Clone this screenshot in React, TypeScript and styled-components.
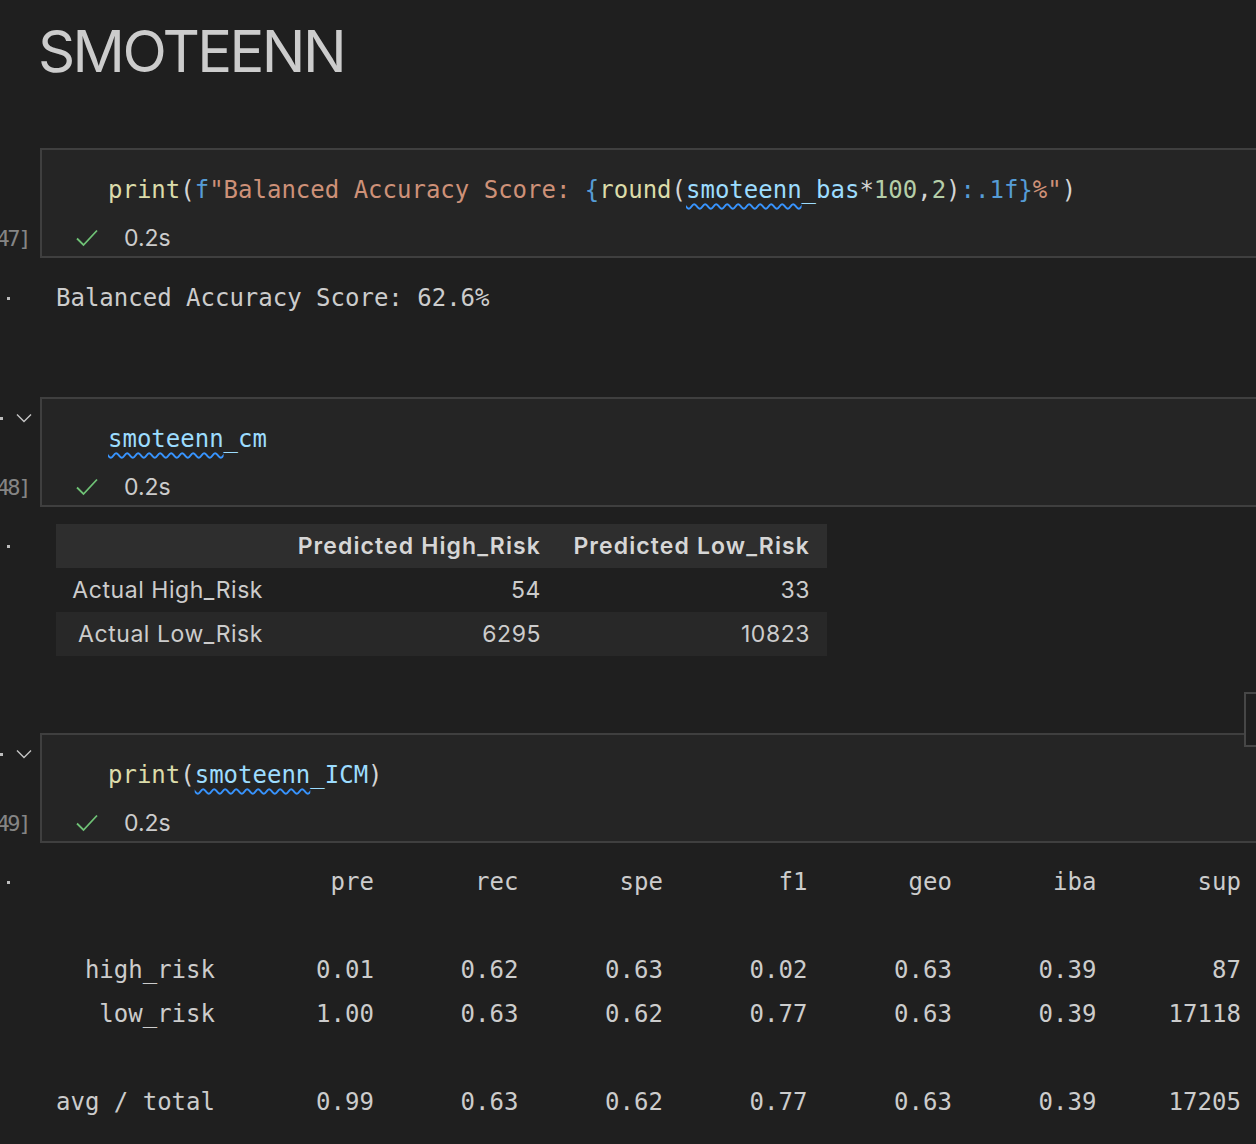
import React from "react";
import styled, { createGlobalStyle } from "styled-components";

const Global = createGlobalStyle`
  html, body { margin: 0; padding: 0; background: #1f1f1f; overflow: hidden; }
  #root { width: 1256px; height: 1144px; overflow: hidden; }
`;

const Page = styled.div`
  display: flex;
  flex-direction: column;
  background: #1f1f1f;
  color: #cccccc;
  min-height: 1144px;
`;

const Title = styled.h1`
  margin: 22px 0 0 38px;
  font-family: Inter, "Liberation Sans", sans-serif;
  font-weight: 400;
  font-size: 58px;
  line-height: 58px;
  letter-spacing: -2.6px;
  color: #cccccc;
`;

const CellRow = styled.div<{ $top: number }>`
  position: relative;
  display: grid;
  grid-template-columns: 40px 1fr;
  margin-top: ${(p) => p.$top}px;
  height: 110px;
`;

const Gutter = styled.div`
  display: flex;
  flex-direction: column;
  justify-content: space-between;
  overflow: hidden;
`;

const Toolbar = styled.div`
  display: flex;
  align-items: center;
  height: 16px;
  margin-top: 13px;
  gap: 13px;
  color: #c5c5c5;
`;

const Dot = styled.span`
  display: block;
  width: 3px;
  height: 3px;
  background: #bdbdbd;
  flex: none;
`;

const ExecCount = styled.div`
  display: flex;
  justify-content: flex-end;
  align-items: center;
  height: 36px;
  margin-bottom: 2px;
  padding-right: 11px;
  font-family: "DejaVu Sans Mono", monospace;
  font-size: 22px;
  letter-spacing: -2.4px;
  color: #858585;
  white-space: nowrap;
`;

const CellBox = styled.div`
  box-sizing: border-box;
  margin-right: -20px;
  border: 2px solid #3f3f3f;
  background: #252525;
  padding-top: 22px;
  display: flex;
  flex-direction: column;
  gap: 12px;
`;

const CodeLine = styled.div`
  height: 36px;
  line-height: 36px;
  padding-left: 66px;
  font-family: "DejaVu Sans Mono", monospace;
  font-size: 24px;
  color: #d4d4d4;
  white-space: pre;
`;

type Tone = "fn" | "var" | "str" | "kw" | "num" | "plain";
const toneColor: Record<Tone, string> = {
  fn: "#dcdcaa",
  var: "#9cdcfe",
  str: "#ce9178",
  kw: "#569cd6",
  num: "#b5cea8",
  plain: "#d4d4d4",
};

const Tok = styled.span<{ $t: Tone }>`
  color: ${(p) => toneColor[p.$t]};
`;

const Squiggle = styled.span`
  text-decoration: underline wavy #3794ff;
  text-decoration-thickness: 1.5px;
  text-underline-offset: 5px;
  text-decoration-skip-ink: none;
`;

const Status = styled.div`
  display: flex;
  align-items: center;
  height: 36px;
  padding-left: 33px;
  gap: 25px;
  font-family: Inter, "Liberation Sans", sans-serif;
  font-size: 23px;
  color: #cccccc;
`;

const EdgeTab = styled.div`
  position: absolute;
  top: -41px;
  right: -12px;
  width: 20px;
  height: 51px;
  border: 2px solid #474747;
  background: #1f1f1f;
`;

const Output = styled.div<{ $top: number }>`
  display: grid;
  grid-template-columns: 40px 1fr;
  padding-top: ${(p) => p.$top}px;
`;

const OutGutter = styled.div<{ $lh: number }>`
  display: flex;
  align-items: center;
  height: ${(p) => p.$lh}px;
  padding-left: 7px;
`;

const Pre = styled.pre<{ $lh: number }>`
  margin: 0;
  padding-left: 16px;
  font-family: "DejaVu Sans Mono", monospace;
  font-size: 24px;
  line-height: ${(p) => p.$lh}px;
  color: #cccccc;
  white-space: pre;
`;

const TableWrap = styled.div`
  padding-left: 16px;
`;

const Table = styled.table`
  border-collapse: collapse;
  table-layout: fixed;
  width: 771px;
  font-family: Inter, "Liberation Sans", sans-serif;
  font-size: 23px;
  color: #cccccc;
`;

const HeadRow = styled.tr`
  background: #2e2e2e;
  height: 44px;
`;

const BodyRow = styled.tr<{ $shade: boolean }>`
  background: ${(p) => (p.$shade ? "#282828" : "transparent")};
  height: 44px;
`;

const Th = styled.th`
  padding: 0 17px 0 0;
  text-align: right;
  font-weight: 600;
  letter-spacing: 1.1px;
  color: #d6d6d6;
  white-space: nowrap;
`;

const Td = styled.td`
  padding: 0 17px 0 0;
  text-align: right;
  letter-spacing: 0.55px;
  white-space: nowrap;
`;

const Chevron = () => (
  <svg width="16" height="10" viewBox="0 0 16 10" fill="none">
    <polyline points="1,1.5 8,8.5 15,1.5" stroke="#c5c5c5" strokeWidth="1.4" />
  </svg>
);

const Check = () => (
  <svg width="24" height="20" viewBox="0 0 24 20" fill="none">
    <polyline points="2,10.5 8.5,17 22,2.5" stroke="#6fc276" strokeWidth="1.8" />
  </svg>
);

const Cell: React.FC<{
  top: number;
  count: number;
  toolbar?: boolean;
  edge?: boolean;
  children: React.ReactNode;
}> = ({ top, count, toolbar, edge, children }) => (
  <CellRow $top={top}>
    {edge && <EdgeTab />}
    <Gutter>
      <Toolbar>
        {toolbar && (
          <>
            <Dot />
            <Chevron />
          </>
        )}
      </Toolbar>
      <ExecCount>[{count}]</ExecCount>
    </Gutter>
    <CellBox>
      <CodeLine>{children}</CodeLine>
      <Status>
        <Check />
        <span>0.2s</span>
      </Status>
    </CellBox>
  </CellRow>
);

const report = [
  "                   pre       rec       spe        f1       geo       iba       sup",
  "",
  "  high_risk       0.01      0.62      0.63      0.02      0.63      0.39        87",
  "   low_risk       1.00      0.63      0.62      0.77      0.63      0.39     17118",
  "",
  "avg / total       0.99      0.63      0.62      0.77      0.63      0.39     17205",
].join("\n");

export default function App() {
  return (
    <Page>
      <Global />
      <Title>SMOTEENN</Title>

      <Cell top={68} count={47}>
        <Tok $t="fn">print</Tok>
        <Tok $t="plain">(</Tok>
        <Tok $t="kw">f</Tok>
        <Tok $t="str">"Balanced Accuracy Score: </Tok>
        <Tok $t="kw">{"{"}</Tok>
        <Tok $t="fn">round</Tok>
        <Tok $t="plain">(</Tok>
        <Tok $t="var">
          <Squiggle>smoteenn</Squiggle>_bas
        </Tok>
        <Tok $t="plain">*</Tok>
        <Tok $t="num">100</Tok>
        <Tok $t="plain">,</Tok>
        <Tok $t="num">2</Tok>
        <Tok $t="plain">)</Tok>
        <Tok $t="kw">:.1f{"}"}</Tok>
        <Tok $t="str">%"</Tok>
        <Tok $t="plain">)</Tok>
      </Cell>

      <Output $top={22}>
        <OutGutter $lh={36}>
          <Dot />
        </OutGutter>
        <Pre $lh={36}>Balanced Accuracy Score: 62.6%</Pre>
      </Output>

      <Cell top={81} count={48} toolbar>
        <Tok $t="var">
          <Squiggle>smoteenn</Squiggle>_cm
        </Tok>
      </Cell>

      <Output $top={17}>
        <OutGutter $lh={44}>
          <Dot />
        </OutGutter>
        <TableWrap>
          <Table>
            <colgroup>
              <col style={{ width: 224 }} />
              <col style={{ width: 278 }} />
              <col style={{ width: 269 }} />
            </colgroup>
            <thead>
              <HeadRow>
                <Th></Th>
                <Th>Predicted High_Risk</Th>
                <Th>Predicted Low_Risk</Th>
              </HeadRow>
            </thead>
            <tbody>
              <BodyRow $shade={false}>
                <Td>Actual High_Risk</Td>
                <Td>54</Td>
                <Td>33</Td>
              </BodyRow>
              <BodyRow $shade>
                <Td>Actual Low_Risk</Td>
                <Td>6295</Td>
                <Td>10823</Td>
              </BodyRow>
            </tbody>
          </Table>
        </TableWrap>
      </Output>

      <Cell top={77} count={49} toolbar edge>
        <Tok $t="fn">print</Tok>
        <Tok $t="plain">(</Tok>
        <Tok $t="var">
          <Squiggle>smoteenn</Squiggle>_ICM
        </Tok>
        <Tok $t="plain">)</Tok>
      </Cell>

      <Output $top={17}>
        <OutGutter $lh={44}>
          <Dot />
        </OutGutter>
        <Pre $lh={44}>{report}</Pre>
      </Output>
    </Page>
  );
}
